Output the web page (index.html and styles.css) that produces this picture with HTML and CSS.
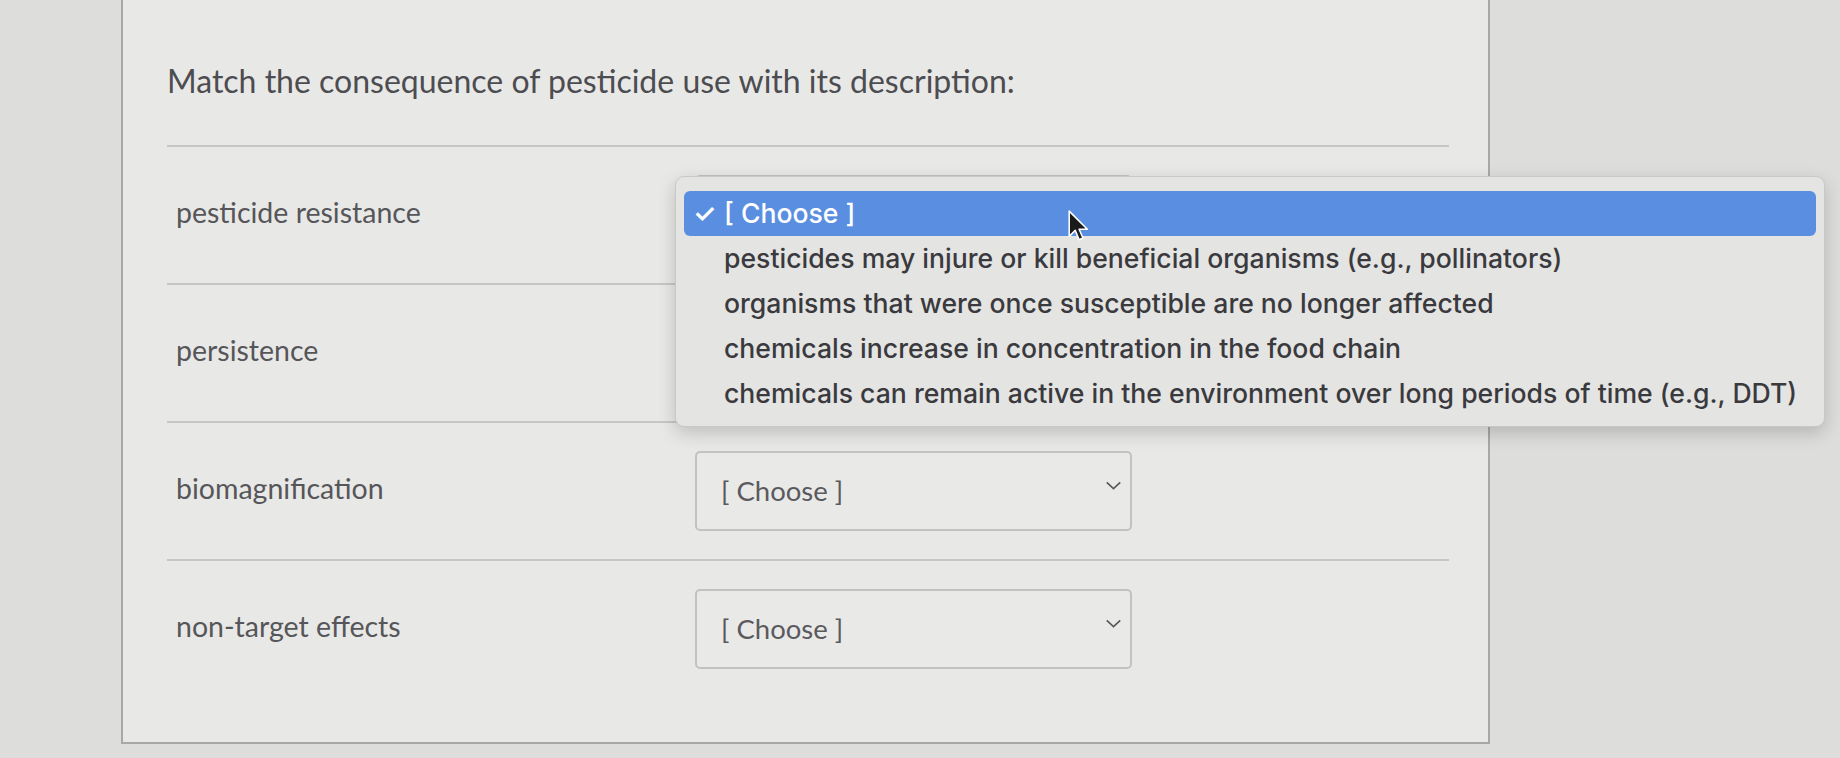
FILE: index.html
```html
<!DOCTYPE html>
<html lang="en">
<head>
<meta charset="utf-8">
<title>Matching question</title>
<link rel="stylesheet" href="styles.css">
</head>
<body>
<div class="screen">
  <div class="panel">
    <h1 class="title">Match the consequence of pesticide use with its description:</h1>
    <div class="rows">
      <div class="row">
        <div class="label">pesticide resistance</div>
        <div class="select covered"><span>[ Choose ]</span><svg class="chev" viewBox="0 0 18 10"><path d="M1.5 1.5 L9 8.5 L16.5 1.5"/></svg></div>
      </div>
      <div class="row">
        <div class="label">persistence</div>
        <div class="select covered"><span>[ Choose ]</span><svg class="chev" viewBox="0 0 18 10"><path d="M1.5 1.5 L9 8.5 L16.5 1.5"/></svg></div>
      </div>
      <div class="row">
        <div class="label">biomagnification</div>
        <div class="select"><span>[ Choose ]</span><svg class="chev" viewBox="0 0 18 10"><path d="M1.5 1.5 L9 8.5 L16.5 1.5"/></svg></div>
      </div>
      <div class="row">
        <div class="label">non-target effects</div>
        <div class="select"><span>[ Choose ]</span><svg class="chev" viewBox="0 0 18 10"><path d="M1.5 1.5 L9 8.5 L16.5 1.5"/></svg></div>
      </div>
    </div>
  </div>

  <div class="menu">
    <div class="opt selected"><span class="check">✓</span>[ Choose ]</div>
    <div class="opt">pesticides may injure or kill beneficial organisms (e.g., pollinators)</div>
    <div class="opt">organisms that were once susceptible are no longer affected</div>
    <div class="opt">chemicals increase in concentration in the food chain</div>
    <div class="opt">chemicals can remain active in the environment over long periods of time (e.g., DDT)</div>
  </div>

  <svg class="cursor" viewBox="0 0 20 30"><path d="M2 1 L2 24 L7.5 18.5 L11 27 L14.5 25.5 L11 17.5 L18.5 17.5 Z"/></svg>
</div>
</body>
</html>
```

FILE: styles.css
```css
html, body {
  margin: 0;
  padding: 0;
}
body {
  background: #dcdcda;
  font-family: Lato, "Open Sans", sans-serif;
}
.screen {
  position: relative;
  width: 1840px;
  height: 758px;
  overflow: hidden;
  background: #dddddb;
}
.panel {
  box-sizing: border-box;
  margin-left: 121px;
  width: 1369px;
  height: 744px;
  background: #e8e8e6;
  border-left: 2px solid #a8a8a6;
  border-right: 2px solid #a8a8a6;
  border-bottom: 2px solid #a8a8a6;
  padding-left: 44px;
  padding-top: 62px;
}
.title {
  margin: 0 0 45px 0;
  font-family: Lato, sans-serif;
  font-weight: 400;
  font-size: 32px;
  line-height: 38px;
  color: #4c4c51;
}
.rows {
  width: 1282px;
}
.row {
  display: flex;
  align-items: center;
  border-top: 2px solid #c6c6c4;
  padding: 28px 0;
}
.label {
  box-sizing: border-box;
  width: 528px;
  padding-left: 9px;
  padding-bottom: 6px;
  font-size: 28.5px;
  color: #56565a;
}
.select {
  box-sizing: border-box;
  width: 437px;
  height: 80px;
  border: 2px solid #c2c2c0;
  border-radius: 5px;
  display: flex;
  align-items: center;
  justify-content: space-between;
  padding: 0 8px 2px 24px;
  font-size: 27.5px;
  color: #5a5a5e;
  background: #e9e9e7;
}
.select.covered span {
  visibility: hidden;
}
.chev {
  width: 17px;
  height: 9px;
  margin-bottom: 10px;
}
.chev path {
  fill: none;
  stroke: #58585b;
  stroke-width: 1.8;
}
.menu {
  position: absolute;
  left: 675px;
  top: 176px;
  width: 1150px;
  box-sizing: border-box;
  padding: 14px 8px 10px 8px;
  background: #e4e4e2;
  border: 1px solid #c8c8c6;
  border-radius: 9px;
  box-shadow: 0 6px 18px rgba(0, 0, 0, 0.18);
  font-family: Inter, "Open Sans", sans-serif;
  font-size: 26.6px;
  font-weight: 500;
  color: #3a3a3e;
}
.opt {
  position: relative;
  height: 45px;
  line-height: 45px;
  padding-left: 40px;
  white-space: nowrap;
}
.opt.selected {
  background: #5a8ee0;
  color: #ffffff;
  border-radius: 6px;
}
.check {
  position: absolute;
  left: 9px;
  top: 0;
  font-size: 26px;
  font-weight: 600;
}
.cursor {
  position: absolute;
  left: 1067px;
  top: 210px;
  width: 22px;
  height: 33px;
}
.cursor path {
  fill: #1a1a1a;
  stroke: #ffffff;
  stroke-width: 1.4;
  stroke-linejoin: round;
}
```
